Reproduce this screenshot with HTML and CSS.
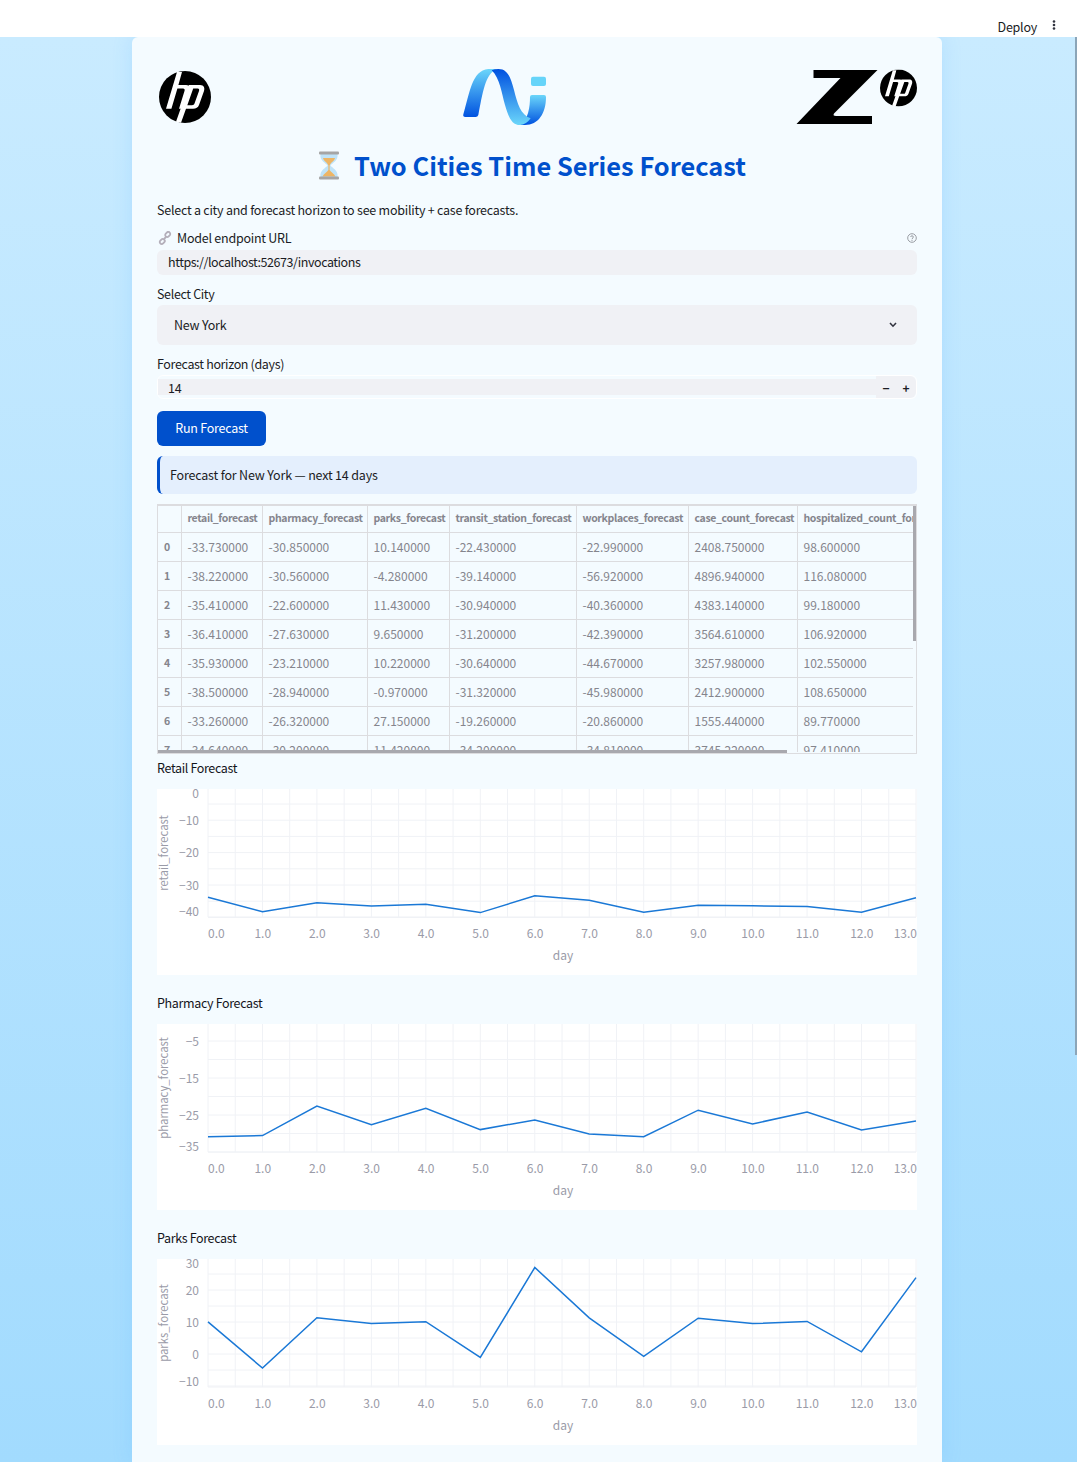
FILE: index.html
```html
<!DOCTYPE html>
<html>
<head>
    <title>Two Cities Time Series Forecast</title>
    <meta charset="UTF-8">
    <link rel="stylesheet" href="styles.css">
</head>
<body>
    <div class="topbar">
        <span class="deploy">Deploy</span>
        <svg class="kebab" width="4" height="10" viewBox="0 0 4 10"><circle cx="2" cy="1.5" r="1.3"/><circle cx="2" cy="5" r="1.3"/><circle cx="2" cy="8.5" r="1.3"/></svg>
    </div>
    <div class="app">
        <div class="page-scroll"></div>
        <div class="card">
            <svg width="0" height="0" class="defs">
                <defs>
                    <symbol id="hp" viewBox="-26 -26 52 52">
                        <circle r="26" fill="#000"/>
                        <path fill="#fff" d="M-19 11.7 L-8 -25 H-3 L-6.6 -12 H1 C5 -12 6 -9 5 -6 L-0.5 11.7 H-6 L-0.5 -6 C0 -7.5 -0.5 -8.5 -2 -8.5 H-7.6 L-13.6 11.7 Z"/>
                        <path fill="#fff" fill-rule="evenodd" d="M-9 24.8 L4 -12 H15 C19 -12 20 -9 19 -6 L14 8 C13 10.5 11 11.7 8 11.7 H1 L-4 25.7 Z M8.2 -8.5 H12.8 C14 -8.5 14.5 -7.5 14 -6 L9.5 6.5 C9 7.7 8.5 8.2 7 8.2 H2.3 Z"/>
                    </symbol>
                    <linearGradient id="ribbon-up" x1="0" y1="0" x2="0" y2="1">
                        <stop offset="0" stop-color="#6bd6fa"/>
                        <stop offset="1" stop-color="#0052e0"/>
                    </linearGradient>
                    <linearGradient id="ribbon-down" x1="0" y1="0" x2="0" y2="1">
                        <stop offset="0" stop-color="#0050e0"/>
                        <stop offset="1" stop-color="#6bd6fa"/>
                    </linearGradient>
                </defs>
            </svg>

            <div class="logos">
                <svg class="logo-hp" width="52" height="52"><use href="#hp"/></svg>
                <svg class="logo-ai" width="130" height="90" viewBox="0 0 390 270">
                    <path fill="url(#ribbon-up)" d="M70 193 C88 135 95 60 145 57 L170 57 C135 72 128 130 115 195 Q113 201 107 201 H76 Q68 201 70 193 Z"/>
                    <path fill="url(#ribbon-up)" d="M240 225 C265 210 270 170 270 141 Q270 135 276 135 H312 Q318 135 318 141 C318 190 295 225 255 225 Z"/>
                    <path fill="url(#ribbon-down)" d="M155 61 Q165 57 175 57 C205 57 212 85 222 120 C232 160 242 195 272 205 Q258 225 240 225 C215 225 205 200 195 165 C185 130 180 85 155 61 Z"/>
                    <rect x="273" y="80" width="45" height="28" rx="6" fill="#66d4f9"/>
                </svg>
                <svg class="logo-z" width="122" height="56" viewBox="0 0 122 56">
                    <path transform="translate(1 0)" d="M17.5 1 H81.5 L38 44.5 Q36.5 47 40 47 H76 V55 H0.5 L44.5 9 H17.5 Z"/>
                    <use href="#hp" x="85" y="0.5" width="37" height="37"/>
                </svg>
            </div>

            <h1 class="title">
                <svg width="20" height="29" viewBox="0 0 20 29">
                    <path d="M1.5 3 H18.5 C19.5 10 13 12 11.5 14.5 C13 17 19.5 19 18.5 26 H1.5 C0.5 19 7 17 8.5 14.5 C7 12 0.5 10 1.5 3 Z" fill="#bfe3f8"/>
                    <path d="M4 7 H16 C15.5 10 11.5 11.5 10.6 14.5 V19 C12 21 15 22.5 16.5 25.5 H3.5 C5 22.5 8 21 9.4 19 V14.5 C8.5 11.5 4.5 10 4 7 Z" fill="#edb565"/>
                    <rect x="0" y="0.5" width="20" height="3" rx="1" fill="#a5a5a5"/>
                    <rect x="0" y="25.5" width="20" height="3" rx="1" fill="#a5a5a5"/>
                </svg>
                <span>Two Cities Time Series Forecast</span>
            </h1>

            <p class="intro">Select a city and forecast horizon to see mobility + case forecasts.</p>

            <div class="label-row">
                <label>
                    <svg class="link-icon" width="14" height="14" viewBox="0 0 14 14" fill="none" stroke="#b4afba" stroke-width="1.8"><path d="M6 8 L8 6"/><rect x="7" y="1.5" width="5.5" height="4" rx="2" transform="rotate(-45 9.7 3.5)"/><rect x="1.5" y="8.5" width="5.5" height="4" rx="2" transform="rotate(-45 4.2 10.5)"/></svg>
                    <span>Model endpoint URL</span>
                </label>
                <svg class="help" width="10" height="10" viewBox="0 0 10 10" fill="none" stroke="#8f9299"><circle cx="5" cy="5" r="4.3" stroke-width="0.9"/><path d="M3.6 4 C3.6 2.4 6.4 2.4 6.4 4 C6.4 5 5 5 5 6.2" stroke-width="0.9"/><circle cx="5" cy="7.5" r="0.3" stroke-width="0.6"/></svg>
            </div>
            <div class="url-input">https://localhost:52673/invocations</div>

            <label class="field-label">Select City</label>
            <div class="select">
                <span>New York</span>
                <svg width="8" height="6" viewBox="0 0 8 6" fill="none" stroke="#31333f" stroke-width="1.6"><path d="M1 1 L4 4.2 L7 1"/></svg>
            </div>

            <label class="field-label horizon-label">Forecast horizon (days)</label>
            <div class="number">
                <div class="number-value">14</div>
                <div class="stepper"><span>&minus;</span><span>+</span></div>
            </div>

            <button class="run-btn">Run Forecast</button>

            <div class="info">Forecast for New York — next 14 days</div>

            <div class="table-wrap">
                <div class="table-scroll">
                    <table id="forecast-table"></table>
                </div>
                <div class="bar-v"></div>
                <div class="bar-h"></div>
            </div>

            <div id="charts"></div>
        </div>
    </div>
    <script src="script.js"></script>
</body>
</html>
```

FILE: styles.css
```css
html, body {
    margin: 0;
    height: 100%;
    overflow: hidden;
}

body {
    font-family: "Noto Sans CJK SC", "Noto Sans", sans-serif;
    font-size: 12.5px;
    letter-spacing: -0.24px;
    color: #1b1c24;
    background: #fff;
}

.topbar {
    height: 37px;
    display: flex;
    justify-content: flex-end;
    background: #fff;
    padding-right: 21px;
}

.deploy {
    margin-top: 17px;
    line-height: 20px;
    color: #1b1c24;
}

.kebab {
    margin: 20px 0 0 15px;
    fill: #31333f;
}

.app {
    position: relative;
    height: 1425px;
    overflow: hidden;
    background: linear-gradient(180deg, #c9ebff 0%, #a2dbfe 100%);
}

.page-scroll {
    position: absolute;
    top: 0;
    right: 0;
    width: 2px;
    height: 1018px;
    background: #8ba5b8;
}

.card {
    width: 760px;
    height: 1425px;
    margin-left: 132px;
    padding: 0 25px;
    background: #f4fbff;
    border-radius: 6px 6px 0 0;
    box-shadow: 0 0 20px rgba(80, 170, 255, 0.18);
}

.defs {
    position: absolute;
}

.logos {
    display: flex;
    justify-content: space-between;
    align-items: flex-start;
    height: 110px;
    padding-top: 18px;
    box-sizing: border-box;
}

.logo-hp {
    margin: 16px 0 0 2px;
}

.logo-ai {
    margin: -5px 0 0 3px;
}

.logo-z {
    margin-top: 14px;
}

.title {
    margin: 0;
    height: 37px;
    display: flex;
    justify-content: center;
    align-items: center;
    gap: 15px;
    font-size: 25.4px;
    font-weight: 700;
    letter-spacing: 0;
    color: #0050cc;
    padding-right: 9px;
}

.title svg {
    flex: none;
}

.title span {
    margin-bottom: 2px;
}

.intro {
    margin: 16px 0 0;
    height: 20px;
    line-height: 20px;
}

.label-row {
    display: flex;
    justify-content: space-between;
    align-items: center;
    height: 20px;
    margin-top: 8px;
}

.label-row label {
    display: flex;
    align-items: center;
    gap: 5px;
    padding-left: 1px;
}

.label-row label span {
    margin-bottom: 2px;
}

.url-input {
    height: 25px;
    line-height: 23px;
    margin-top: 2px;
    padding-left: 11px;
    letter-spacing: -0.45px;
    background: #f0f1f5;
    border-radius: 6px;
}

.field-label {
    display: block;
    height: 20px;
    line-height: 20px;
    margin-top: 9px;
    letter-spacing: -0.35px;
}

.select {
    display: flex;
    justify-content: space-between;
    align-items: center;
    height: 40px;
    margin-top: 1px;
    padding: 0 20px 0 17px;
    background: #f0f1f5;
    border-radius: 6px;
}

.select span {
    margin-bottom: 2px;
}

.horizon-label {
    margin-top: 9px;
}

.number {
    display: flex;
    align-items: center;
    height: 24px;
    margin-top: 1px;
    border: 1px solid #fff;
    border-radius: 6px;
    box-sizing: border-box;
}

.number-value {
    flex: 1;
    height: 16px;
    line-height: 18px;
    padding-left: 10px;
    background: #f0f1f5;
}

.stepper {
    display: flex;
    align-items: center;
    justify-content: space-around;
    width: 40px;
    height: 22px;
    font-weight: 700;
    font-size: 12px;
    background: #f0f1f5;
    border-radius: 0 6px 6px 0;
}

.run-btn {
    display: block;
    width: 109px;
    height: 35px;
    margin-top: 12px;
    padding: 0 0 2px;
    border: none;
    border-radius: 6px;
    background: #0050cc;
    color: #fff;
    font-family: inherit;
    font-size: 12.5px;
    letter-spacing: -0.24px;
    cursor: pointer;
}

.info {
    height: 38px;
    line-height: 38px;
    margin-top: 10px;
    padding-left: 10px;
    letter-spacing: -0.18px;
    background: #e4effd;
    border-left: 3px solid #0050cc;
    border-radius: 6px;
}

.table-wrap {
    position: relative;
    height: 250px;
    margin-top: 10px;
    border: 1px solid #dcdcdf;
    border-top-width: 2px;
    box-sizing: border-box;
}

.table-scroll {
    width: 755px;
    height: 246px;
    overflow: hidden;
}

table {
    width: 819px;
    table-layout: fixed;
    border-collapse: collapse;
    font-size: 12px;
    letter-spacing: 0;
    color: #85858d;
}

th, td {
    padding: 0 4px 0 6px;
    border-right: 1px solid #dcdcdf;
    border-bottom: 1px solid #dcdcdf;
    text-align: left;
    white-space: nowrap;
    overflow: hidden;
    box-sizing: border-box;
}

th {
    font-size: 10.5px;
    font-weight: 700;
    letter-spacing: -0.35px;
}

thead th {
    height: 26px;
    padding-bottom: 2px;
}

tbody td, tbody th {
    height: 29px;
}

tbody th {
    font-size: 10.5px;
    letter-spacing: 0;
}

.bar-v {
    position: absolute;
    top: 0;
    right: 0;
    width: 3px;
    height: 135px;
    background: #a8a8ae;
}

.bar-h {
    position: absolute;
    left: 0;
    bottom: 0;
    width: 629px;
    height: 3px;
    background: #a8a8ae;
}

.chart-title {
    height: 20px;
    line-height: 20px;
    margin-top: 4px;
    letter-spacing: -0.35px;
    color: #14151c;
}

.chart {
    display: block;
    margin-top: 11px;
    background: #fff;
}

.chart-block + .chart-block .chart-title {
    margin-top: 18px;
}

.chart text {
    font-family: "Noto Sans CJK SC", "Noto Sans", sans-serif;
    font-size: 12px;
    letter-spacing: 0;
    fill: #9a9ba8;
}

.chart .axis-title {
    font-size: 11.3px;
}

.grid {
    stroke: #f0f2f6;
    stroke-width: 1;
}

.series {
    fill: none;
    stroke: #1a78d6;
    stroke-width: 1.5;
}
```

FILE: script.js
```js
var columns = ["retail_forecast", "pharmacy_forecast", "parks_forecast", "transit_station_forecast", "workplaces_forecast", "case_count_forecast", "hospitalized_count_forecast"];
var widths = [23, 81, 105, 82, 127, 112, 109, 180];
var rows = [
    ["-33.730000", "-30.850000", "10.140000", "-22.430000", "-22.990000", "2408.750000", "98.600000"],
    ["-38.220000", "-30.560000", "-4.280000", "-39.140000", "-56.920000", "4896.940000", "116.080000"],
    ["-35.410000", "-22.600000", "11.430000", "-30.940000", "-40.360000", "4383.140000", "99.180000"],
    ["-36.410000", "-27.630000", "9.650000", "-31.200000", "-42.390000", "3564.610000", "106.920000"],
    ["-35.930000", "-23.210000", "10.220000", "-30.640000", "-44.670000", "3257.980000", "102.550000"],
    ["-38.500000", "-28.940000", "-0.970000", "-31.320000", "-45.980000", "2412.900000", "108.650000"],
    ["-33.260000", "-26.320000", "27.150000", "-19.260000", "-20.860000", "1555.440000", "89.770000"],
    ["-34.640000", "-30.200000", "11.420000", "-34.200000", "-34.810000", "3745.220000", "97.410000"]
];

var charts = [
    {
        title: "Retail Forecast", ylabel: "retail_forecast", height: 186,
        values: [-33.73, -38.22, -35.41, -36.41, -35.93, -38.5, -33.26, -34.64, -38.4, -36.2, -36.4, -36.6, -38.4, -33.9],
        // value at top of plot and pixels per unit
        top: 0, scale: 3.21, gridStart: 15, gridStep: 16.2,
        ticks: [["0", 5], ["\u221210", 31.5], ["\u221220", 64], ["\u221230", 96.5], ["\u221240", 123]]
    },
    {
        title: "Pharmacy Forecast", ylabel: "pharmacy_forecast", height: 186,
        values: [-30.85, -30.56, -22.6, -27.63, -23.21, -28.94, -26.32, -30.1, -30.85, -23.7, -27.4, -24.2, -29.05, -26.6],
        top: -0.4, scale: 3.7, gridStart: 17, gridStep: 18.5,
        ticks: [["\u22125", 17.5], ["\u221215", 54.5], ["\u221225", 91.5], ["\u221235", 122.5]]
    },
    {
        title: "Parks Forecast", ylabel: "parks_forecast", height: 186,
        values: [10.14, -4.28, 11.43, 9.65, 10.22, -0.97, 27.15, 11.42, -0.6, 11.3, 9.6, 10.3, 0.8, 24],
        top: 29.8, scale: 3.2, gridStart: 15, gridStep: 16,
        ticks: [["30", 5], ["20", 31.5], ["10", 63.5], ["0", 95.5], ["\u221210", 122.5]]
    }
];

function buildTable() {
    var cols = "<colgroup>";
    widths.forEach(function (w) {
        cols += '<col style="width:' + w + 'px">';
    });
    cols += "</colgroup>";
    var head = "<thead><tr><th></th>";
    columns.forEach(function (c) {
        head += "<th>" + c + "</th>";
    });
    head += "</tr></thead>";
    var body = "<tbody>";
    rows.forEach(function (row, i) {
        body += "<tr><th>" + i + "</th>";
        row.forEach(function (v) {
            body += "<td>" + v + "</td>";
        });
        body += "</tr>";
    });
    body += "</tbody>";
    document.getElementById("forecast-table").innerHTML = cols + head + body;
}

function buildChart(c) {
    var left = 51, right = 759, plotH = 128, step = (right - left) / 13;
    var svg = "";
    // grid lines
    for (var y = c.gridStart; y <= plotH + 0.5; y += c.gridStep) {
        svg += '<line class="grid" x1="' + left + '" x2="' + right + '" y1="' + y + '" y2="' + y + '"/>';
    }
    svg += '<line class="grid" x1="' + left + '" x2="' + right + '" y1="' + plotH + '" y2="' + plotH + '"/>';
    for (var i = 0; i <= 26; i++) {
        var gx = left + i * step / 2;
        svg += '<line class="grid" x1="' + gx + '" x2="' + gx + '" y1="0" y2="' + plotH + '"/>';
    }
    // line
    var pts = c.values.map(function (v, n) {
        return (left + n * step).toFixed(1) + "," + ((c.top - v) * c.scale).toFixed(1);
    });
    svg += '<polyline class="series" points="' + pts.join(" ") + '"/>';
    // y ticks
    c.ticks.forEach(function (t) {
        svg += '<text x="42" y="' + (t[1] + 4) + '" text-anchor="end">' + t[0] + "</text>";
    });
    // x ticks
    for (var d = 0; d <= 13; d++) {
        var anchor = d === 0 ? "start" : d === 13 ? "end" : "middle";
        var tx = d === 13 ? 760 : left + d * step + (d === 0 ? 0 : 0.3);
        svg += '<text x="' + tx + '" y="148.5" text-anchor="' + anchor + '">' + d + ".0</text>";
    }
    svg += '<text x="406" y="171" text-anchor="middle">day</text>';
    svg += '<text class="axis-title" transform="translate(11 64) rotate(-90)" text-anchor="middle">' + c.ylabel + "</text>";

    return '<div class="chart-block"><div class="chart-title">' + c.title + "</div>" +
        '<svg class="chart" width="760" height="' + c.height + '">' + svg + "</svg></div>";
}

buildTable();
document.getElementById("charts").innerHTML = charts.map(buildChart).join("");
```
